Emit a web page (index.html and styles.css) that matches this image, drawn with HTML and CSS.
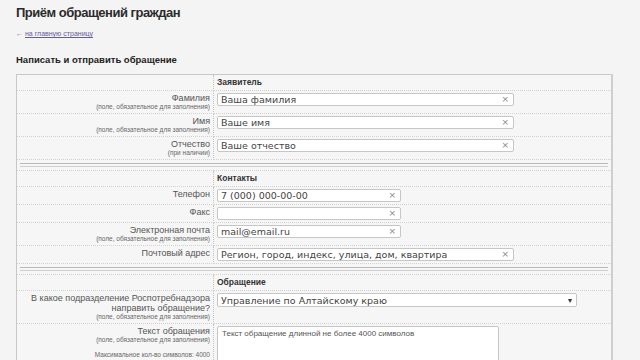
FILE: index.html
```html
<!DOCTYPE html>
<html lang="ru">
<head>
    <meta charset="UTF-8">
    <title>Приём обращений граждан</title>
    <link rel="stylesheet" href="styles.css">
</head>
<body>
<div class="page">
    <h1 class="title">Приём обращений граждан</h1>
    <p class="back"><span class="arrow">&larr;</span> <a href="#">на главную страницу</a></p>

    <h2 class="subtitle">Написать и отправить обращение</h2>

    <table class="form">
        <tr class="group">
            <td class="lbl"></td>
            <td class="fld">Заявитель</td>
        </tr>
        <tr>
            <td class="lbl">Фамилия<small>(поле, обязательное для заполнения)</small></td>
            <td class="fld"><div class="input wide"><span>Ваша фамилия</span><i>&times;</i></div></td>
        </tr>
        <tr>
            <td class="lbl">Имя<small>(поле, обязательное для заполнения)</small></td>
            <td class="fld"><div class="input wide"><span>Ваше имя</span><i>&times;</i></div></td>
        </tr>
        <tr>
            <td class="lbl">Отчество<small>(при наличии)</small></td>
            <td class="fld"><div class="input wide"><span>Ваше отчество</span><i>&times;</i></div></td>
        </tr>
        <tr class="sep"><td colspan="2"><div class="rule"></div></td></tr>

        <tr class="group">
            <td class="lbl"></td>
            <td class="fld">Контакты</td>
        </tr>
        <tr>
            <td class="lbl">Телефон</td>
            <td class="fld"><div class="input short"><span>7 (000) 000-00-00</span><i>&times;</i></div></td>
        </tr>
        <tr>
            <td class="lbl">Факс</td>
            <td class="fld"><div class="input short"><span></span><i>&times;</i></div></td>
        </tr>
        <tr>
            <td class="lbl">Электронная почта<small>(поле, обязательное для заполнения)</small></td>
            <td class="fld"><div class="input short"><span>mail@email.ru</span><i>&times;</i></div></td>
        </tr>
        <tr>
            <td class="lbl">Почтовый адрес</td>
            <td class="fld"><div class="input wide"><span>Регион, город, индекс, улица, дом, квартира</span><i>&times;</i></div></td>
        </tr>
        <tr class="sep"><td colspan="2"><div class="rule"></div></td></tr>

        <tr class="group">
            <td class="lbl"></td>
            <td class="fld">Обращение</td>
        </tr>
        <tr>
            <td class="lbl">В какое подразделение Роспотребнадзора<br>направить обращение?<small>(поле, обязательное для заполнения)</small></td>
            <td class="fld"><div class="input select"><span>Управление по Алтайскому краю</span><b>&#9662;</b></div></td>
        </tr>
        <tr>
            <td class="lbl">Текст обращения<small>(поле, обязательное для заполнения)</small><small class="max">Максимальное кол-во символов: 4000</small></td>
            <td class="fld"><div class="textarea">Текст обращение длинной не более 4000 символов</div></td>
        </tr>
    </table>
</div>
</body>
</html>
```

FILE: styles.css
```css
body {
    margin: 0;
    background: #f4f4f4;
    color: #333;
    font-family: "Liberation Sans", Arial, sans-serif;
}
.page {
    padding: 5px 16px 0 16px;
}
.title {
    font-size: 13px;
    font-weight: bold;
    letter-spacing: -0.5px;
    margin: 0;
    line-height: 16px;
    color: #2b2b2b;
}
.back {
    margin: 8px 0 0 0;
    font-size: 7px;
    line-height: 9px;
}
.back .arrow {
    color: #777;
}
.back a {
    color: #6a5a9a;
}
.subtitle {
    font-size: 9.5px;
    font-weight: bold;
    margin: 16px 0 0 0;
    line-height: 12px;
    color: #222;
}

/* Form table */
.form {
    margin-top: 8px;
    width: 597px;
    border-collapse: collapse;
    border: 1px solid #c8c8c8;
    border-right: 2px solid #cfcfcf;
    background: #f6f6f6;
}
.form td {
    padding: 2px 4px 2px 3px;
    border-bottom: 1px dotted #d2d2d2;
    vertical-align: top;
}
.form td.lbl {
    width: 190px;
    text-align: right;
    font-size: 9px;
    line-height: 10px;
    color: #555;
    border-right: 1px dotted #c4c4c4;
    padding-right: 3px;
}
.lbl small {
    display: block;
    font-size: 6.5px;
    line-height: 8px;
    color: #666;
}
.lbl small.max {
    margin-top: 7px;
}
.group td {
    height: 11px;
}
.form .group td.fld {
    font-size: 8.5px;
    font-weight: bold;
    color: #333;
}
.form tr.sep td {
    padding: 3px 3px 3px 3px;
}
.rule {
    height: 2px;
    border-top: 1px solid #b8b8b8;
    border-bottom: 1px solid #cfcfcf;
}

/* Inputs */
.input {
    display: flex;
    align-items: center;
    justify-content: space-between;
    height: 11px;
    line-height: 11px;
    background: #fff;
    border: 1px solid #c6c6c6;
    border-radius: 2px;
    padding: 0 4px 0 3px;
    font-family: "DejaVu Sans", Verdana, sans-serif;
    font-size: 9.5px;
    color: #444;
}
.input i {
    font-style: normal;
    font-size: 9px;
    color: #888;
}
.input b {
    font-weight: normal;
    font-size: 8px;
    color: #333;
}
.wide {
    width: 288px;
}
.short {
    width: 175px;
}
.select {
    width: 351px;
    height: 12px;
}
.textarea {
    width: 272px;
    height: 60px;
    background: #fff;
    border: 1px solid #c6c6c6;
    border-radius: 2px;
    padding: 2px 4px;
    font-size: 8px;
    color: #555;
}
```
